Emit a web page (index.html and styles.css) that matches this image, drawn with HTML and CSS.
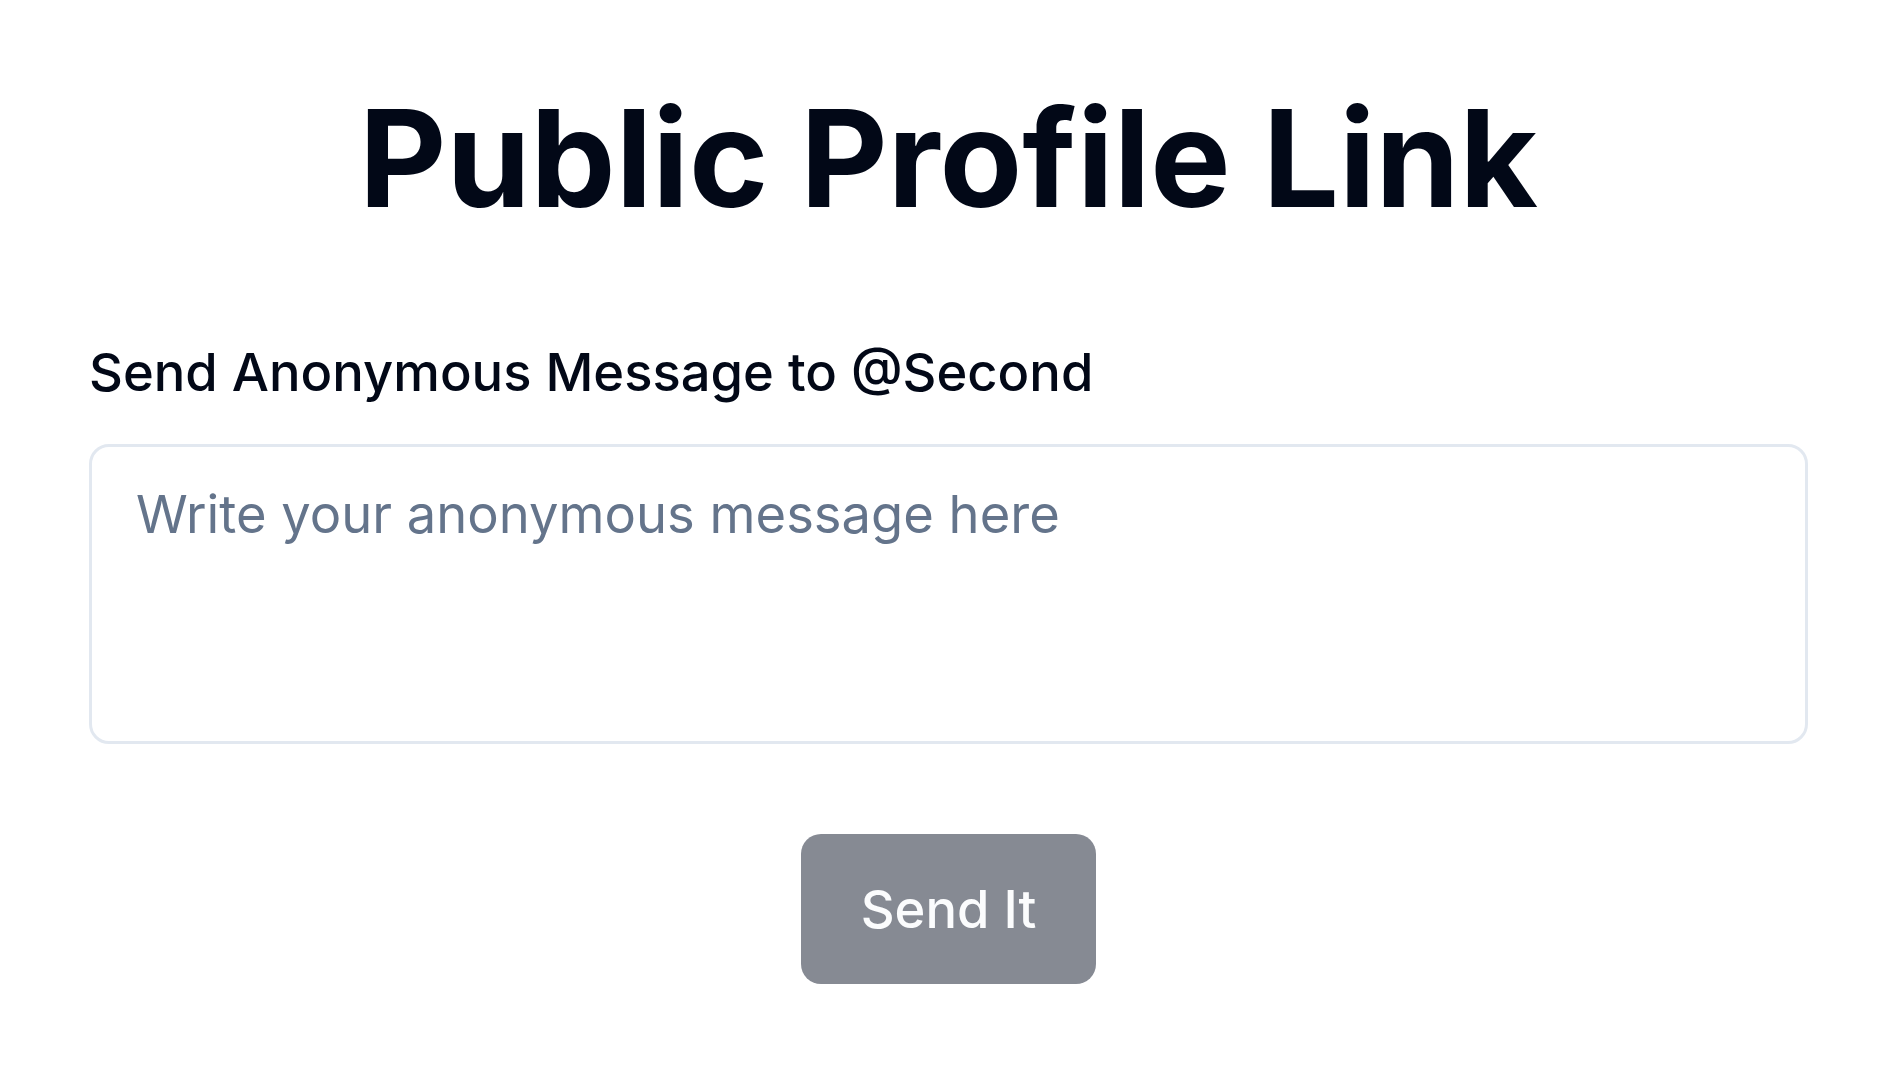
FILE: index.html
```html
<!DOCTYPE html>
<html lang="en">
<head>
<meta charset="utf-8">
<title>Public Profile Link</title>
<link rel="stylesheet" href="styles.css">
</head>
<body>
<main class="page">
  <h1 class="title">Public Profile Link</h1>
  <form class="form">
    <label class="label" for="msg">Send Anonymous Message to @Second</label>
    <textarea id="msg" class="message" placeholder="Write your anonymous message here"></textarea>
    <div class="actions">
      <button type="button" class="send" disabled>Send It</button>
    </div>
  </form>
</main>
</body>
</html>
```

FILE: styles.css
```css
html, body {
  margin: 0;
  padding: 0;
  background: #ffffff;
}
body {
  font-family: Inter, "Noto Sans", sans-serif;
  color: #020817;
}
.page {
  width: 1719px;
  margin-left: 89px;
  padding-top: 91px;
}
.title {
  margin: 0;
  font-size: 135px;
  line-height: 135px;
  font-weight: 700;
  text-align: center;
  color: #020817;
}
.form {
  display: flex;
  flex-direction: column;
  margin-top: 106px;
}
.label {
  font-size: 52.5px;
  line-height: 80px;
  font-weight: 500;
  color: #020817;
  margin-bottom: 32px;
}
.message {
  box-sizing: border-box;
  width: 100%;
  height: 300px;
  border: 3.33px solid #e2e8f0;
  border-radius: 20px;
  padding: 26.67px 40px 26.67px 44px;
  font-family: Inter, "Noto Sans", sans-serif;
  font-size: 52.5px;
  line-height: 80px;
  color: #020817;
  background: #ffffff;
  resize: none;
  outline: none;
}
.message::placeholder {
  color: #64748b;
  opacity: 1;
}
.actions {
  display: flex;
  justify-content: center;
  margin-top: 90px;
}
.send {
  width: 295px;
  height: 150px;
  border: none;
  border-radius: 20px;
  background: #0f172a;
  opacity: 0.5;
  color: #f8fafc;
  font-family: Inter, "Noto Sans", sans-serif;
  font-size: 52.5px;
  font-weight: 500;
  padding: 0;
}
```
